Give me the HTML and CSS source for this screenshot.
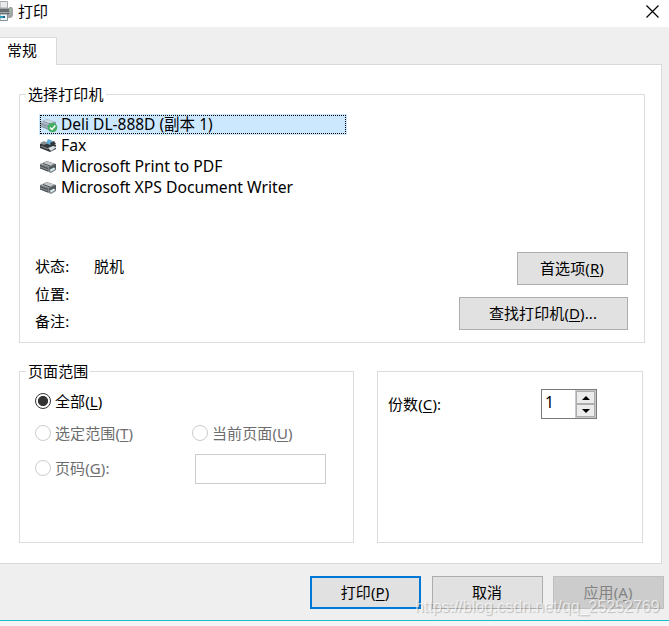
FILE: index.html
```html
<!DOCTYPE html>
<html lang="zh-CN">
<head>
<meta charset="utf-8">
<title>打印</title>
<link rel="stylesheet" href="styles.css">
</head>
<body>
<svg class="defs" width="0" height="0">
  <symbol id="printer" viewBox="0 0 19 16">
    <path d="m1 5 7-3 9 3v6l-5 3L1 9z" fill="#7d8387"/>
    <path d="m2 5 6-2.500 7 2-5 3z" fill="#c3c8cb"/>
    <path d="m4 4.500 7 2.500M1 6.500l8 3M1 9l8 3" stroke="#42494d" fill="none"/>
    <path d="m10 8 7-3v5l-6 3z" fill="#50575b"/>
    <path d="m11 10.500 4-2 1.500 1.500-5 3z" fill="#d5e8ed"/>
  </symbol>
</svg>
<main class="dialog">
  <header class="titlebar">
    <svg class="app-icon" width="13" height="20" viewBox="0 0 13 20">
      <path d="M0 .5h7.500V7H0z" fill="#e8eaec" stroke="#a6aaad"/>
      <path d="M0 7h9V6h3l1 2v7l-2 2H0z" fill="#a3a6a9"/>
      <path d="M0 8h9v3H0z" fill="#6a6d70"/>
      <path d="M0 12h9v1H0z" fill="#4d5053"/>
      <path d="M0 13h7.500v6.500H0z" fill="#e9f3f7" stroke="#8d9295"/>
      <path d="M0 15h4v2H0z" fill="#2a9bb5"/><path d="M3 15h2v2H3z" fill="#215f91"/>
      <path d="M10 8h1v2h-1z" fill="#8fdf74"/>
    </svg>
    <h1 class="title">打印</h1>
    <svg class="close" width="13" height="13" viewBox="0 0 13 13"><path d="m.5.5 12 12m0-12-12 12" stroke="#000" stroke-width="1.200"/></svg>
  </header>
  <nav class="tabs"><span class="tab">常规</span></nav>
  <section class="panel">
    <fieldset class="group printers">
      <legend>选择打印机</legend>
      <ul class="list">
        <li class="row selected"><svg width="19" height="16" viewBox="0 0 19 16"><g opacity=".55"><use href="#printer"/></g><circle cx="13.500" cy="10.500" r="4.800" fill="#45ad65"/><path d="m11 10.500 2 2 3.300-4" fill="none" stroke="#fff" stroke-width="1.500"/></svg><span class="mixed">Deli DL-888D (副本 1)</span></li>
        <li class="row"><svg width="19" height="16" viewBox="0 0 19 16"><path d="m1 6 5-2 11 3v4l-6 3L1 10z" fill="#33383c"/><path d="m1 5 4-2 4 2-4 2z" fill="#8b9195"/><path d="m7 5 2-4 5 2-3 4z" fill="#65acd5"/><path d="m11 5 4-2 2 3-4 2z" fill="#31373b"/><path d="m9 10 5-2 4 1-6 4z" fill="#d9e0e4"/><path d="m2 8 7 3" stroke="#8b9195"/></svg><span class="latin">Fax</span></li>
        <li class="row"><svg width="19" height="16"><use href="#printer"/></svg><span class="latin">Microsoft Print to PDF</span></li>
        <li class="row"><svg width="19" height="16"><use href="#printer"/></svg><span class="latin">Microsoft XPS Document Writer</span></li>
      </ul>
      <div class="details">
        <dl class="status">
          <dt>状态:</dt><dd>脱机</dd>
          <dt>位置:</dt><dd></dd>
          <dt>备注:</dt><dd></dd>
        </dl>
        <div class="side">
          <button class="btn">首选项(<u>R</u>)</button>
          <button class="btn wide">查找打印机(<u>D</u>)...</button>
        </div>
      </div>
    </fieldset>
    <div class="lower">
      <fieldset class="group range">
        <legend>页面范围</legend>
        <div class="options">
          <label class="opt"><i class="radio on"></i><span>全部(<u>L</u>)</span></label><span></span>
          <label class="opt off"><i class="radio"></i><span>选定范围(<u>T</u>)</span></label>
          <label class="opt off"><i class="radio"></i><span>当前页面(<u>U</u>)</span></label>
          <label class="opt off"><i class="radio"></i><span>页码(<u>G</u>):</span></label>
          <span class="pages"></span>
        </div>
      </fieldset>
      <div class="group copies">
        <span class="copies-label">份数(<u>C</u>):</span>
        <div class="spin">
          <span class="value">1</span>
          <span class="arrows">
            <span class="arrow"><svg width="8" height="4"><path d="M0 4 4 0l4 4z"/></svg></span>
            <span class="arrow"><svg width="8" height="4"><path d="m0 0 4 4 4-4z"/></svg></span>
          </span>
        </div>
      </div>
    </div>
  </section>
  <footer class="actions">
    <button class="btn primary">打印(<u>P</u>)</button>
    <button class="btn">取消</button>
    <button class="btn disabled">应用(<u>A</u>)</button>
  </footer>
  <div class="watermark">https://blog.csdn.net/qq_25252769</div>
</main>
</body>
</html>
```

FILE: styles.css
```css
* { box-sizing: border-box; }
body { margin: 0; background: #f4f4f4; }
.defs { position: absolute; }
.dialog {
  position: relative;
  width: 669px;
  height: 621px;
  background: #efefef;
  border-bottom: 1px solid #19bdcb;
  font: 400 15px/21px "Noto Sans", "Noto Sans CJK SC", sans-serif;
  letter-spacing: .1px;
  color: #000;
  overflow: hidden;
}
.dialog u { text-decoration-thickness: 1px; text-underline-offset: 2px; }
.titlebar { display: flex; height: 27px; background: #fff; padding-right: 10px; }
.app-icon { margin-top: 1px; }
.title { margin: 1px auto 0 5px; font-size: 15px; font-weight: 400; line-height: 21px; }
.close { margin-top: 5px; }
.tabs { height: 38px; padding-top: 10px; display: flex; position: relative; }
.tab {
  width: 57px; height: 28px; padding: 2px 0 0 7px;
  background: #fff; border: solid #d9d9d9; border-width: 1px 1px 0 0;
}
.panel {
  width: 662px; height: 500px; margin-top: -1px; padding: 19px 0 0 19px;
  background: #fff; border: solid #d9d9d9; border-width: 1px 1px 1px 0;
}
.group { margin: 0; border: 1px solid #dcdcdc; min-width: 0; }
.group legend { height: 21px; padding: 0 2px; line-height: 21px; }
.printers { width: 626px; height: 259px; padding: 9px 16px 0 6px; }
.list { list-style: none; margin: 0 0 54px 13px; padding: 0; width: 308px; letter-spacing: 0; }
.row { display: flex; align-items: center; height: 21px; gap: 3px; white-space: nowrap; }
.row svg { flex: none; }
.latin { font-size: 15.7px; }
.mixed { font-size: 15.5px; }
.selected { background: #cce8ff; outline: 1px dotted #000; outline-offset: -2px; }
.details { display: flex; justify-content: space-between; }
.status { display: grid; grid-template-columns: 59px 80px; grid-auto-rows: 27.5px; margin: 1px 0 0 9px; line-height: 27px; }
.status dd { margin: 0; }
.side { display: flex; flex-direction: column; align-items: flex-end; gap: 12px; }
.btn {
  width: 111px; height: 33px; padding: 0 1px 0 0; border: 1px solid #adadad; border-radius: 0;
  background: #e1e1e1; color: #000; font: inherit; letter-spacing: inherit; white-space: nowrap;
}
.btn.wide { width: 169px; }
.lower { display: flex; gap: 23px; margin-top: 18px; }
.range { width: 335px; height: 182px; padding: 4px 0 0 6px; }
.options { display: grid; grid-template-columns: 157px 150px; grid-template-rows: 30px 34px 36px; align-items: center; margin-left: 9px; }
.opt { display: flex; align-items: center; gap: 4px; white-space: nowrap; }
.opt.off { color: #6d6d6d; }
.radio { width: 16px; height: 16px; border: 1px solid #ccc; border-radius: 50%; background: #fff; }
.radio.on { border-color: #333; background: radial-gradient(circle, #333 4.700px, #fff 5.400px); }
.pages { width: 131px; height: 30px; margin: 2px 0 0 3px; border: 1px solid #ccc; }
.copies { display: flex; justify-content: space-between; align-items: flex-start; width: 266px; height: 172px; margin-top: 10px; padding: 17px 45px 0 10px; }
.copies-label { margin-top: 5px; }
.spin { display: flex; width: 56px; height: 30px; border: 1px solid #7a7a7a; }
.value { flex: 1; padding: 2px 0 0 3px; font-size: 15.7px; }
.arrows { display: flex; flex-direction: column; width: 21px; border: 1px solid #c6c6cc; background: #f0f0f0; }
.arrow { flex: 1; display: flex; align-items: center; justify-content: center; border: 1px solid #adadad; background: #ececec; }
.actions { display: flex; gap: 11px; padding: 12px 0 0 310px; }
.primary { border: 2px solid #0078d7; }
.disabled { margin-left: -1px; background: #ccc; border-color: #bfbfbf; color: #838383; }
.watermark {
  position: absolute; left: 415px; top: 597px;
  font: 16px/20px "Liberation Sans", sans-serif; letter-spacing: -.03px; white-space: nowrap;
  color: rgba(255, 255, 255, .65); text-shadow: 1px 1px 1px rgba(0, 0, 0, .22);
}
```
